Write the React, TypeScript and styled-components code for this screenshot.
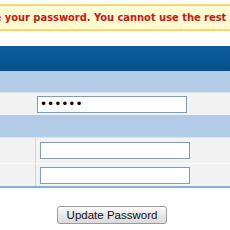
import React from "react";
import styled, { createGlobalStyle } from "styled-components";

const GlobalStyle = createGlobalStyle`
  html, body {
    margin: 0;
    padding: 0;
    background: #fff;
    overflow: hidden;
  }
  body {
    font-family: "Liberation Sans", Arial, sans-serif;
  }
`;

const Page = styled.div`
  width: 230px;
  padding-top: 4px;
`;

const Notice = styled.div`
  margin: 0 -2px;
  height: 23px;
  line-height: 23px;
  border: 2px solid #f7d970;
  background: #fffbd2;
  color: #c41a12;
  font-family: "DejaVu Sans Condensed", "DejaVu Sans", sans-serif;
  font-weight: bold;
  font-size: 11px;
  white-space: nowrap;
  overflow: hidden;
  text-indent: -94px;
`;

const Form = styled.div`
  margin-top: 15px;
  border-bottom: 2px solid #86aedb;
`;

const HeaderBar = styled.div`
  height: 25px;
  background: linear-gradient(#0c5c9e, #06508f);
`;

const SubBar = styled.div<{ $h: number }>`
  height: ${(p) => p.$h}px;
  background: #b2cce8;
  border-bottom: 1px solid #d7e3f0;
`;

const Row = styled.div<{ $h: number }>`
  display: grid;
  grid-template-columns: 36px 1fr;
  height: ${(p) => p.$h}px;
  background: #f2f2f2;
  & + & {
    border-top: 1px solid #fafafa;
  }
`;

const Label = styled.div<{ $divider?: boolean }>`
  border-right: 1px solid ${(p) => (p.$divider ? "#d3d3d3" : "transparent")};
`;

const Value = styled.div<{ $pad: number }>`
  display: flex;
  align-items: center;
  padding-left: ${(p) => p.$pad}px;
`;

const Input = styled.input<{ $h: number }>`
  box-sizing: border-box;
  width: 150px;
  height: ${(p) => p.$h}px;
  margin: 0;
  padding: 0 2px;
  border: 1px solid #7f9db9;
  background: #fff;
  color: #000;
  font-family: "DejaVu Sans", sans-serif;
  font-size: 12px;
  letter-spacing: 0;
  outline: none;
`;

const Footer = styled.div`
  display: flex;
  justify-content: center;
  padding: 18px 6px 0 0;
`;

const Button = styled.button`
  box-sizing: border-box;
  width: 110px;
  height: 18px;
  padding: 0;
  border: 1px solid #9a9a9a;
  border-radius: 3px;
  background: linear-gradient(#fdfdfd, #e6e6e6 55%, #dadada);
  color: #111;
  font-family: "Liberation Sans", Arial, sans-serif;
  font-size: 11.5px;
  line-height: 16px;
`;

export default function App() {
  return (
    <Page>
      <GlobalStyle />
      <Notice>
        You must change your password. You cannot use the rest of the site until you do.
      </Notice>
      <Form>
        <HeaderBar />
        <SubBar $h={21} />
        <Row $h={22}>
          <Label />
          <Value $pad={1}>
            <Input $h={17} type="password" defaultValue="secret" />
          </Value>
        </Row>
        <SubBar $h={22} />
        <Row $h={25}>
          <Label $divider />
          <Value $pad={4}>
            <Input $h={17} type="password" />
          </Value>
        </Row>
        <Row $h={22}>
          <Label $divider />
          <Value $pad={4}>
            <Input $h={17} type="password" />
          </Value>
        </Row>
      </Form>
      <Footer>
        <Button>Update Password</Button>
      </Footer>
    </Page>
  );
}
